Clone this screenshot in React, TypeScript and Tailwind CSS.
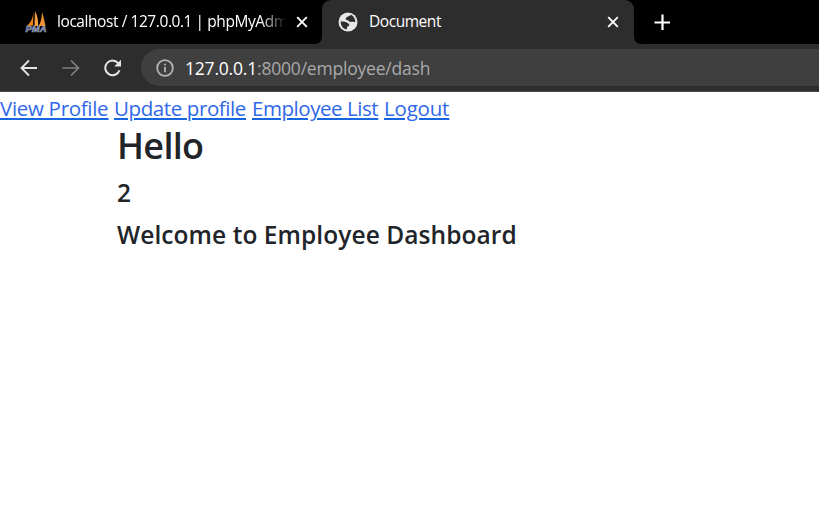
import React from "react";

function CloseIcon() {
  return (
    <svg width="12" height="12" viewBox="0 0 12 12" stroke="#fff" strokeWidth="1.9" className="shrink-0">
      <path d="M1.2 1.2 10.8 10.8M10.8 1.2 1.2 10.8" />
    </svg>
  );
}

function GlobeIcon() {
  return (
    <svg width="20" height="20" viewBox="0 0 20 20" fill="none" className="shrink-0">
      <circle cx="10" cy="10" r="9.500" fill="#e8e8e8" />
      <path d="M13 2.800C11.800 4.500 8.500 4.200 7.800 6.500C7.400 8.300 9.300 8 10.500 8.600C11.300 10.800 13.800 9.800 17.300 10.300C17.300 7 15.800 4 13 2.800Z" fill="#2d2d2d" />
      <path d="M2.600 9.500C4.800 9.500 6.500 9 8.300 10.300C9.800 11.200 11.500 12 11.300 13.300C10.800 14.500 9.200 14.300 9 15.300V17.300C5.500 17.300 2.700 14.200 2.600 9.500Z" fill="#2d2d2d" />
    </svg>
  );
}

function SailIcon() {
  return (
    <svg width="22" height="22" viewBox="0 0 22 22" className="shrink-0">
      <path d="M8.5 1C8 7 5.500 12 1.500 15.500L8 14.500Z" fill="#e57f16" />
      <path d="M10 0C12.500 5 13.500 10 13 15L9.500 15Z" fill="#f8a340" />
      <path d="M17 1C17 7 15.500 12 13.500 15L20.500 15C19.500 10 18.500 5 17 1Z" fill="#ef9130" />
      <text x="0.5" y="20.5" fontSize="8.500" textLength="21" lengthAdjust="spacingAndGlyphs" fontWeight="700" fontStyle="italic" fill="#4d5d88" stroke="#a4aecb" strokeWidth="0.5" fontFamily="Liberation Sans, sans-serif">PMA</text>
    </svg>
  );
}

function TabStrip() {
  return (
    <div className="flex h-11 bg-black text-[15.5px] text-white">
      <div className="flex w-[322px] items-center pl-[25px]">
        <SailIcon />
        <span className="ml-[10px] w-[229px] overflow-hidden whitespace-nowrap tracking-[-0.43px] [mask-image:linear-gradient(to_right,#000_89%,transparent)]">
          localhost / 127.0.0.1 | phpMyAdm
        </span>
        <span className="ml-[10px]"><CloseIcon /></span>
      </div>
      <div className="relative flex w-[312px] items-center rounded-t-[9px] bg-[#2d2d2d] pl-[16px]">
        <svg className="absolute bottom-0 -left-2" width="8" height="8"><path d="M8 0V8H0Q8 8 8 0Z" fill="#2d2d2d" /></svg>
        <svg className="absolute -right-2 bottom-0" width="8" height="8"><path d="M0 0V8H8Q0 8 0 0Z" fill="#2d2d2d" /></svg>
        <GlobeIcon />
        <span className="ml-[11px] w-[238px] tracking-[-0.45px]">Document</span>
        <CloseIcon />
      </div>
      <div className="flex items-center pl-5">
        <svg width="17" height="17" viewBox="0 0 17 17" stroke="#fff" strokeWidth="2.2"><path d="M8.500 .5V16M.5 8.500H16" /></svg>
      </div>
    </div>
  );
}

function Toolbar() {
  return (
    <div className="flex h-12 border-b border-[#484848] bg-[#2d2d2d] pt-[5px]">
      <div className="flex h-[37px] w-[141px] items-center gap-[24px] pl-5">
        <svg width="18" height="18" viewBox="0 0 18 18" fill="none" stroke="#e4e4e4" strokeWidth="1.9"><path d="M17 9H1.500M9 1.500 1.500 9 9 16.500" /></svg>
        <svg width="18" height="18" viewBox="0 0 18 18" fill="none" stroke="#808080" strokeWidth="1.7"><path d="M.5 9H16M9 1.500 16.500 9 9 16.500" /></svg>
        <svg width="18" height="18" viewBox="0 0 18 18" fill="none" stroke="#e4e4e4" strokeWidth="2"><path d="M14.600 4.800A7.300 7.300 0 1 0 15.500 11.200" /><path d="M17 .8V7.500H10.200Z" fill="#e4e4e4" stroke="none" /></svg>
      </div>
      <div className="flex h-[37px] flex-1 items-center rounded-l-full bg-[#3f3f3f] pl-[15px]">
        <svg width="18" height="18" viewBox="0 0 18 18" fill="none" stroke="#b5b5b5" strokeWidth="1.8"><circle cx="9" cy="9" r="7.800" /><path d="M9 8V13.200M9 4.700V6.600" /></svg>
        <span className="ml-[11px] text-[17.5px] leading-6 tracking-[-0.2px] whitespace-nowrap text-[#a9a9a9]">
          <span className="text-white">127.0.0.1</span>:8000/employee/dash
        </span>
      </div>
    </div>
  );
}

export default function App() {
  return (
    <div className="h-[509px] w-[819px] overflow-hidden bg-white font-['Open_Sans',sans-serif]">
      <TabStrip />
      <Toolbar />
      <main className="text-[#212529]">
        <nav className="flex h-[32px] gap-[6px] text-[20.5px] leading-[32px] whitespace-nowrap text-[#2f68ea] underline decoration-[#1667df] decoration-2 underline-offset-2">
          <a className="w-[108px] tracking-[-0.3px]">View Profile</a>
          <a className="w-[132px] tracking-[-0.4px]">Update profile</a>
          <a className="w-[126px] tracking-[-0.45px]">Employee List</a>
          <a className="tracking-[-0.2px]">Logout</a>
        </nav>
        <div className="pl-[117px]">
          <h1 className="text-[36px] leading-[44px] font-semibold tracking-[-0.7px]">Hello</h1>
          <h4 className="mt-[10px] text-[24.5px] leading-[30px] font-semibold">2</h4>
          <h4 className="mt-[12px] text-[24.5px] leading-[30px] font-semibold tracking-[0.07px]">Welcome to Employee Dashboard</h4>
        </div>
      </main>
    </div>
  );
}
